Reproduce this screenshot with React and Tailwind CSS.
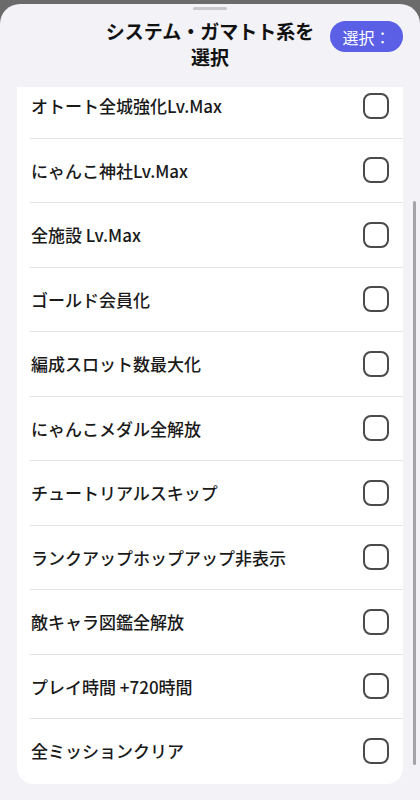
const items = [
  "オトート全城強化Lv.Max",
  "にゃんこ神社Lv.Max",
  "全施設 Lv.Max",
  "ゴールド会員化",
  "編成スロット数最大化",
  "にゃんこメダル全解放",
  "チュートリアルスキップ",
  "ランクアップホップアップ非表示",
  "敵キャラ図鑑全解放",
  "プレイ時間 +720時間",
  "全ミッションクリア",
];

const Row = ({ label, first }) => (
  <div
    className={`flex h-[63.5px] items-center justify-between pl-[14px] pr-[14px] ${
      first ? "-mt-[13px]" : ""
    }`}
  >
    <span className="text-[17px] font-medium text-[#1a1a1a]">{label}</span>
    <span className="h-[26px] w-[26px] rounded-[8px] border-2 border-[#4a4a4a]" />
  </div>
);

export default function App() {
  return (
    <div
      className="h-[800px] w-[420px] overflow-hidden bg-[#6b6b6b] pt-[4px]"
      style={{ fontFamily: '"Noto Sans CJK JP", "Noto Sans", sans-serif' }}
    >
      <div className="relative flex h-[796px] flex-col rounded-t-[20px] bg-[#f2f2f7]">
        <div className="flex justify-center pt-[3px]">
          <div className="h-[3px] w-[34px] rounded-full bg-[#c8c8cc]" />
        </div>
        <div className="flex items-start px-[17px] pt-[8px]">
          <div className="w-[73px]" />
          <h1 className="flex-1 text-center text-[19px] font-bold leading-[26px] text-[#111]">
            システム・ガマトト系を
            <br />
            選択
          </h1>
          <button className="mt-[3px] h-[31px] w-[73px] rounded-full bg-[#5a5fe6] text-[16px] text-white">
            選択：
          </button>
        </div>
        <div className="mt-[17px] mx-[17px] h-[697px] overflow-hidden rounded-b-[16px] bg-white">
          {items.map((label, i) => (
            <div key={label}>
              {i > 0 && <div className="ml-[13px] h-px bg-[#e3e3e6]" />}
              <Row label={label} first={i === 0} />
            </div>
          ))}
        </div>
        <div className="absolute right-[4px] top-[197px] h-[564px] w-[3px] rounded-full bg-[#a3a3a8]" />
      </div>
    </div>
  );
}
